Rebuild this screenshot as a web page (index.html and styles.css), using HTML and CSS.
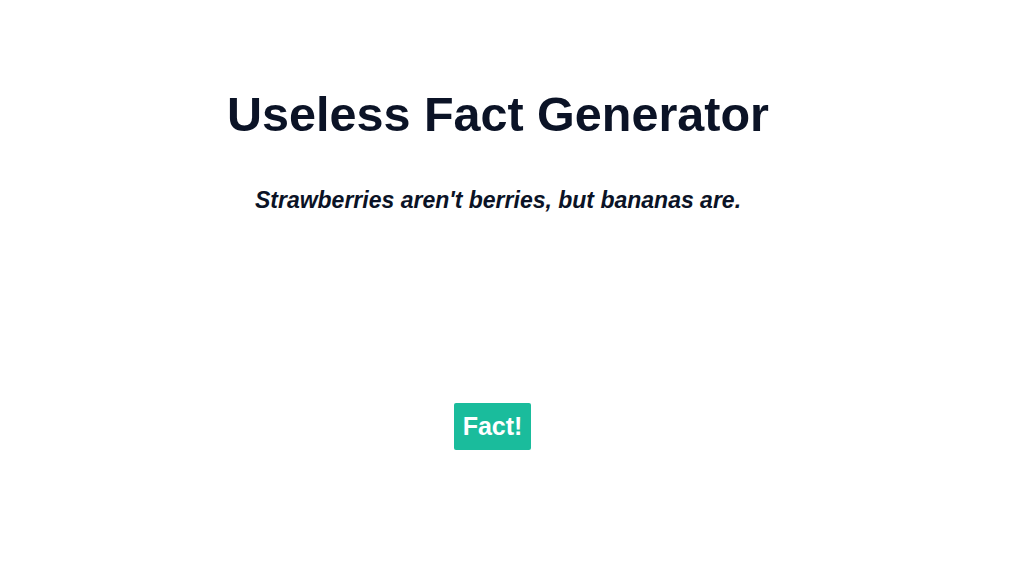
FILE: index.html
```html
<!DOCTYPE html>
<html lang="en">
<head>
<meta charset="utf-8">
<title>Useless Fact Generator</title>
<link rel="stylesheet" href="styles.css">
</head>
<body>
<main class="page">
  <h1 class="title">Useless Fact Generator</h1>
  <p class="fact">Strawberries aren't berries, but bananas are.</p>
  <button class="fact-btn" type="button">Fact!</button>
</main>
</body>
</html>
```

FILE: styles.css
```css
html, body {
  margin: 0;
  padding: 0;
  background: #ffffff;
}
.page {
  width: 996px;
  display: flex;
  flex-direction: column;
  align-items: center;
  font-family: "Liberation Sans", Arial, sans-serif;
  color: #0b1326;
}
.title {
  margin: 86px 0 0;
  font-size: 48.5px;
  line-height: 56px;
  font-weight: 700;
}
.fact {
  margin: 44px 0 0;
  font-size: 23px;
  line-height: 28px;
  font-weight: 700;
  font-style: italic;
}
.fact-btn {
  margin: 189px 11px 0 0;
  width: 77px;
  height: 47px;
  padding: 0;
  border: none;
  border-radius: 2px;
  background: #1abc9c;
  color: #ffffff;
  font-family: "Liberation Sans", Arial, sans-serif;
  font-size: 25px;
  font-weight: 700;
}
```
